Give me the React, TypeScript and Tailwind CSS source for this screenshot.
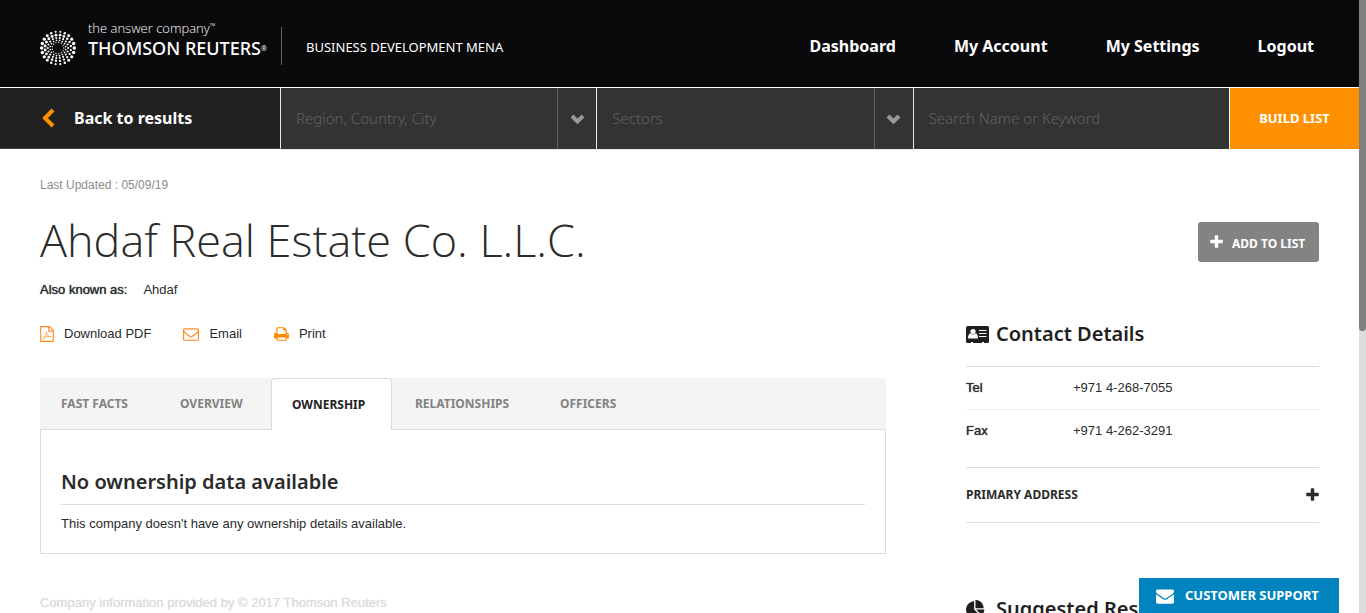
import React from "react";

const HEAD = "font-['Noto_Sans','Open_Sans',sans-serif]";

type GlyphProps = { d: string; width: number; className: string };

function Glyph({ d, width, className }: GlyphProps) {
  return (
    <svg viewBox={`0 0 ${width} 1792`} className={className} fill="currentColor" aria-hidden="true">
      <path d={d} />
    </svg>
  );
}

const PLUS =
  "M1408 736v192q0 40-28 68t-68 28H896v416q0 40-28 68t-68 28H608q-40 0-68-28t-28-68v-416H96q-40 0-68-28t-28-68V736q0-40 28-68t68-28h416V224q0-40 28-68t68-28h192q40 0 68 28t28 68v416h416q40 0 68 28t28 68z";
const PRINT =
  "M384 1536h896v-256H384v256zm0-640h896V512h-160q-40 0-68-28t-28-68V256H384v640zm1152 64q0-26-19-45t-45-19-45 19-19 45 19 45 45 19 45-19 19-45zm128 0v416q0 13-9.5 22.5t-22.5 9.5h-224v160q0 40-28 68t-68 28H352q-40 0-68-28t-28-68v-160H32q-13 0-22.5-9.5T0 1376V960q0-79 56.5-135.5T192 768h64V224q0-40 28-68t68-28h672q40 0 88 20t76 48l152 152q28 28 48 76t20 88v256h64q79 0 135.5 56.5T1664 960z";
const ENVELOPE_OUTLINE =
  "M1664 1504V736q-32 36-69 66-268 206-426 338-51 43-83 67t-86.5 48.5T897 1280h-2q-48 0-102.5-24.5T706 1207t-83-67Q465 1008 197 802q-37-30-69-66v768q0 13 9.5 22.5t22.5 9.5h1472q13 0 22.5-9.5t9.5-22.5zm0-1051v-24.5l-.5-13-3-12.5-5.5-9-9-7.5-14-2.5H160q-13 0-22.5 9.5T128 416q0 168 147 284 193 152 401 317 6 5 35 29.5t46 37.5 44.5 31.5T852 1143t43 9h2q20 0 43-9t50.5-27.5 44.5-31.5 46-37.5 35-29.5q208-165 401-317 54-43 100.5-115.5T1664 453zm128-37v1088q0 66-47 113t-113 47H160q-66 0-113-47T0 1504V416q0-66 47-113t113-47h1472q66 0 113 47t47 113z";
const ENVELOPE =
  "M1792 710v794q0 66-47 113t-113 47H160q-66 0-113-47T0 1504V710q44 49 101 87 362 246 497 345 57 42 92.5 65.5t94.5 48 110 24.5h2q51 0 110-24.5t94.5-48T1191 1142q170-123 498-345 57-39 103-87zm0-294q0 79-49 151t-122 123q-376 261-468 325-10 7-42.5 31t-54 38.5-52 32.5-57.5 27-50 9h-2q-23 0-50-9t-57.5-27-52-32.5-54-38.5T639 1015q-91-64-262-182.5T172 690q-62-42-117-115.5T0 438q0-78 41.5-130T160 256h1472q65 0 112.5 47t47.5 113z";
const PIE =
  "M768 890l546 546q-106 108-247.5 168T768 1664q-209 0-385.5-103T103 1281.5 0 896t103-385.5T382.5 231 768 128v762zm187 6h773q0 157-60 298.5T1500 1442zm709-128H896V0q209 0 385.5 103T1561 382.5 1664 768z";

function PdfIcon() {
  return (
    <svg viewBox="0 0 1536 1792" className="h-4 w-3.5" fill="currentColor" aria-hidden="true">
      <path d="M1468 380q28 28 48 76t20 88v1152q0 40-28 68t-68 28H96q-40 0-68-28t-28-68V96q0-40 28-68T96 0h896q40 0 88 20t76 48zm-444-244v376h376q-10-29-22-41l-313-313q-12-12-41-22zm384 1528V640H992q-40 0-68-28t-28-68V128H128v1536h1280z" />
      <path
        d="M690 740c-60-160 70-160 40 20-10 130 70 330 250 420 100 60 220 60 210 10-20-80-420-50-640 50-180 80-310 220-240 240 90 20 250-330 310-450 50-110 100-210 70-290z"
        fill="none"
        stroke="currentColor"
        strokeWidth="75"
      />
    </svg>
  );
}

function AddressCardIcon() {
  return (
    <svg viewBox="0 0 23 18" className="h-[18px] w-[23px]" aria-hidden="true">
      <path d="M1.500 1h20A1.500 1.500 0 0 1 23 2.500v14a1.500 1.500 0 0 1-1.500 1.500H18v-1h-2v1H7v-1H5v1H1.500A1.500 1.500 0 0 1 0 16.500v-14A1.500 1.500 0 0 1 1.500 1z" fill="#1f1f1f" />
      <circle cx="7" cy="6.600" r="2.600" fill="#fff" />
      <path d="M2 13.600c0-3 .8-5 2.400-5 1.600 1.200 3.600 1.200 5.200 0 1.600 0 2.400 2 2.400 5z" fill="#fff" />
      <path d="M13 5.500h7.500M13 8.500h7.500M13 11.500h7.500" stroke="#fff" strokeWidth="1.200" />
    </svg>
  );
}

function Chevron({ className, points, box }: { className: string; points: string; box: string }) {
  return (
    <svg viewBox={box} className={className} fill="none" stroke="currentColor" strokeWidth="4" aria-hidden="true">
      <polyline points={points} />
    </svg>
  );
}

const RINGS = [
  { radius: 16.3, count: 22, dot: 1.3 },
  { radius: 13, count: 20, dot: 1.2 },
  { radius: 10.2, count: 18, dot: 1.05 },
  { radius: 7.8, count: 16, dot: 0.85 },
  { radius: 5.8, count: 13, dot: 0.65 },
];

function Emblem() {
  return (
    <svg viewBox="0 0 38 38" className="h-[38px] w-[38px]" fill="#fff" aria-hidden="true">
      {RINGS.flatMap((ring, r) =>
        Array.from({ length: ring.count }, (_, i) => {
          const a = ((i + (r % 2) * 0.5) / ring.count) * Math.PI * 2;
          const grow = r === 0 ? 0.7 + 0.65 * Math.abs(Math.cos(a)) : r === 1 ? 1.1 - 0.15 * Math.sin(a + 1) : 1;
          return (
            <circle
              key={`${r}-${i}`}
              cx={19 + ring.radius * Math.cos(a)}
              cy={19 + ring.radius * Math.sin(a)}
              r={ring.dot * grow}
            />
          );
        }),
      )}
    </svg>
  );
}

function Header() {
  return (
    <header className={`flex h-[87px] items-center justify-between bg-[#0a0a0d] pl-[39px] pr-[45px] text-white ${HEAD}`}>
      <div className="flex items-center">
        <a href="#home" className="flex items-center">
          <span className="mt-2">
            <Emblem />
          </span>
          <span className="ml-[11px] block w-[193px] whitespace-nowrap pb-3">
            <span className="block font-['Open_Sans',sans-serif] text-[13px] font-light leading-5">
              the answer company<sup className="text-[8px]">™</sup>
            </span>
            <span className="block text-[18px] font-medium leading-5">
              THOMSON REUTERS<sup className="text-[7px] font-normal">®</sup>
            </span>
          </span>
        </a>
        <span className="mt-1 h-[38px] w-px bg-[#606060]" />
        <span className="ml-6 mt-1.5 whitespace-nowrap text-[13px] leading-5">BUSINESS DEVELOPMENT MENA</span>
      </div>
      <nav className="mt-1 flex gap-[58px] whitespace-nowrap text-base font-bold">
        <a href="#dashboard">Dashboard</a>
        <a href="#account">My Account</a>
        <a href="#settings">My Settings</a>
        <a href="#logout">Logout</a>
      </nav>
    </header>
  );
}

function FilterBox({ label }: { label: string }) {
  return (
    <div className="-mb-px flex min-w-0 flex-1 border-b border-r border-[#e8e8e8] bg-[#333]">
      <input
        aria-label={label}
        placeholder={label}
        className="min-w-0 flex-1 bg-transparent px-[15px] text-[15px] font-light text-white outline-none placeholder:text-[#606060]"
      />
      <button aria-label={`Show ${label}`} className="flex w-[39px] items-center justify-center border-l border-[#606060] text-[#999]">
        <Chevron className="h-3 w-[15px]" points="2,3 7.500,8.500 13,3" box="0 0 15 12" />
      </button>
    </div>
  );
}

function SearchBar() {
  return (
    <form className={`flex h-[62px] border-t border-white ${HEAD}`} onSubmit={(e) => e.preventDefault()}>
      <a
        href="#results"
        className="flex w-[281px] shrink-0 items-center border-r border-b border-r-[#e8e8e8] border-b-[#444] bg-[#212121] pl-[41px] text-base font-bold text-white"
      >
        <Chevron className="h-5 w-3.5 text-[#ff9100]" points="12,2 4,10 12,18" box="0 0 14 20" />
        <span className="ml-[19px]">Back to results</span>
      </a>
      <FilterBox label="Region, Country, City" />
      <FilterBox label="Sectors" />
      <div className="flex min-w-0 flex-1 border-r border-white bg-[#333]">
        <input
          aria-label="Search Name or Keyword"
          placeholder="Search Name or Keyword"
          className="min-w-0 flex-1 bg-transparent px-[15px] text-[15px] font-light text-white outline-none placeholder:text-[#606060]"
        />
      </div>
      <button className="w-[129px] shrink-0 bg-[#ff9100] text-[13px] font-bold text-white">BUILD LIST</button>
    </form>
  );
}

const TABS = ["FAST FACTS", "OVERVIEW", "OWNERSHIP", "RELATIONSHIPS", "OFFICERS"];
const TAB_WIDTHS = ["w-[119px]", "w-[112px]", "w-[121px]", "w-[147px]", "w-[106px]"];

function Ownership() {
  return (
    <section className="mt-[34px]">
      <div role="tablist" className={`flex h-[52px] bg-[#f4f4f4] text-xs font-bold ${HEAD}`}>
        {TABS.map((tab, i) => (
          <button
            key={tab}
            role="tab"
            aria-selected={i === 2}
            className={`${TAB_WIDTHS[i]} whitespace-nowrap text-left ${
              i === 2
                ? "rounded-t border border-b-0 border-[#dcdcdc] bg-white pl-5 text-[#222]"
                : `border-b border-[#dcdcdc] text-[#828282] ${i === 3 ? "pl-[23px]" : "pl-[21px]"}`
            }`}
          >
            {tab}
          </button>
        ))}
        <span className="flex-1 border-b border-[#dcdcdc]" />
      </div>
      <div role="tabpanel" className="border border-t-0 border-[#dcdcdc] px-5 pb-[19px] pt-[37px]">
        <h2 className={`border-b border-[#dcdcdc] pb-[7px] text-xl font-semibold leading-[30px] text-[#2b2b2b] ${HEAD}`}>
          No ownership data available
        </h2>
        <p className="mt-[9px] text-[13px] leading-5">This company doesn't have any ownership details available.</p>
      </div>
    </section>
  );
}

const SOFT_BOLD = "[text-shadow:0_0_1px]";

function Contact() {
  return (
    <aside className="w-[353px] shrink-0 pt-[73px]">
      <div className="flex justify-end">
        <button className={`flex h-10 w-[121px] items-center whitespace-nowrap rounded-[3px] bg-[#838383] pl-3 text-xs font-bold text-white ${HEAD}`}>
          <Glyph d={PLUS} width={1408} className="h-4 w-[13px]" />
          <span className="ml-[9px] pt-1">ADD TO LIST</span>
        </button>
      </div>
      <h2 className={`mt-14 flex items-center gap-[7px] text-xl font-semibold leading-8 text-[#1f1f1f] ${HEAD}`}>
        <AddressCardIcon />
        Contact Details
      </h2>
      <dl className="mt-4 border-y border-[#dcdcdc] pb-[15px] text-[13px] leading-[42px]">
        <div className="flex border-b border-dotted border-[#dcdcdc]">
          <dt className={`w-[107px] ${SOFT_BOLD}`}>Tel</dt>
          <dd>+971 4-268-7055</dd>
        </div>
        <div className="flex">
          <dt className={`w-[107px] ${SOFT_BOLD}`}>Fax</dt>
          <dd>+971 4-262-3291</dd>
        </div>
      </dl>
      <button className={`flex h-[55px] w-full items-center justify-between border-b border-[#dcdcdc] text-xs font-bold text-[#2b2b2b] ${HEAD}`}>
        PRIMARY ADDRESS
        <Glyph d={PLUS} width={1408} className="h-4 w-[13px]" />
      </button>
      <h2 className={`mt-[70px] flex items-center gap-[11px] whitespace-nowrap text-xl font-semibold leading-8 text-[#1f1f1f] ${HEAD}`}>
        <Glyph d={PIE} width={1792} className="h-[19px] w-[19px]" />
        Suggested Research
      </h2>
    </aside>
  );
}

export default function App() {
  return (
    <div className="flex h-screen bg-white font-['Liberation_Sans',Arial,sans-serif] text-[#2b2b2b]">
      <div className="min-w-0 flex-1 overflow-y-auto [scrollbar-width:none]">
        <Header />
        <SearchBar />
        <main className="flex gap-20 px-10">
          <div className="min-w-0 flex-1 pt-[26px]">
            <p className="text-xs leading-5 text-[#8c8c8c]">Last Updated : 05/09/19</p>
            <h1 className="mt-[15px] whitespace-nowrap font-['Open_Sans',sans-serif] text-[45px] font-light leading-[60px]">
              Ahdaf Real Estate Co. L.L.C.
            </h1>
            <p className="mt-2.5 flex gap-4 text-[13px] leading-5">
              <span className={SOFT_BOLD}>Also known as:</span>
              <span>Ahdaf</span>
            </p>
            <div className="mt-6 flex text-[13px] leading-5">
              <a href="#pdf" className="mr-8 flex items-center gap-2.5">
                <span className="text-[#ff8a1c]"><PdfIcon /></span>
                Download PDF
              </a>
              <a href="#email" className="mr-8 flex items-center gap-2.5">
                <Glyph d={ENVELOPE_OUTLINE} width={1792} className="h-4 w-4 text-[#ff8a1c]" />
                Email
              </a>
              <a href="#print" className="flex items-center gap-2.5">
                <Glyph d={PRINT} width={1664} className="h-4 w-[15px] text-[#ff8a00]" />
                Print
              </a>
            </div>
            <Ownership />
            <p className={`mt-[39px] pb-5 text-[13px] leading-5 text-[#dcdcdc] ${SOFT_BOLD}`}>
              Company information provided by © 2017 Thomson Reuters
            </p>
          </div>
          <Contact />
        </main>
      </div>
      <div className="w-[7px] shrink-0 bg-[#dcdcdc]" aria-hidden="true">
        <div className="h-[54%] rounded-b bg-[#808080]" />
      </div>
      <button className={`fixed bottom-0 right-[27px] flex h-[35px] w-[200px] items-center whitespace-nowrap bg-[#0083bf] pl-[17px] text-[13px] font-bold text-white ${HEAD}`}>
        <Glyph d={ENVELOPE} width={1792} className="h-[18px] w-[18px]" />
        <span className="ml-[11px]">CUSTOMER SUPPORT</span>
      </button>
    </div>
  );
}
